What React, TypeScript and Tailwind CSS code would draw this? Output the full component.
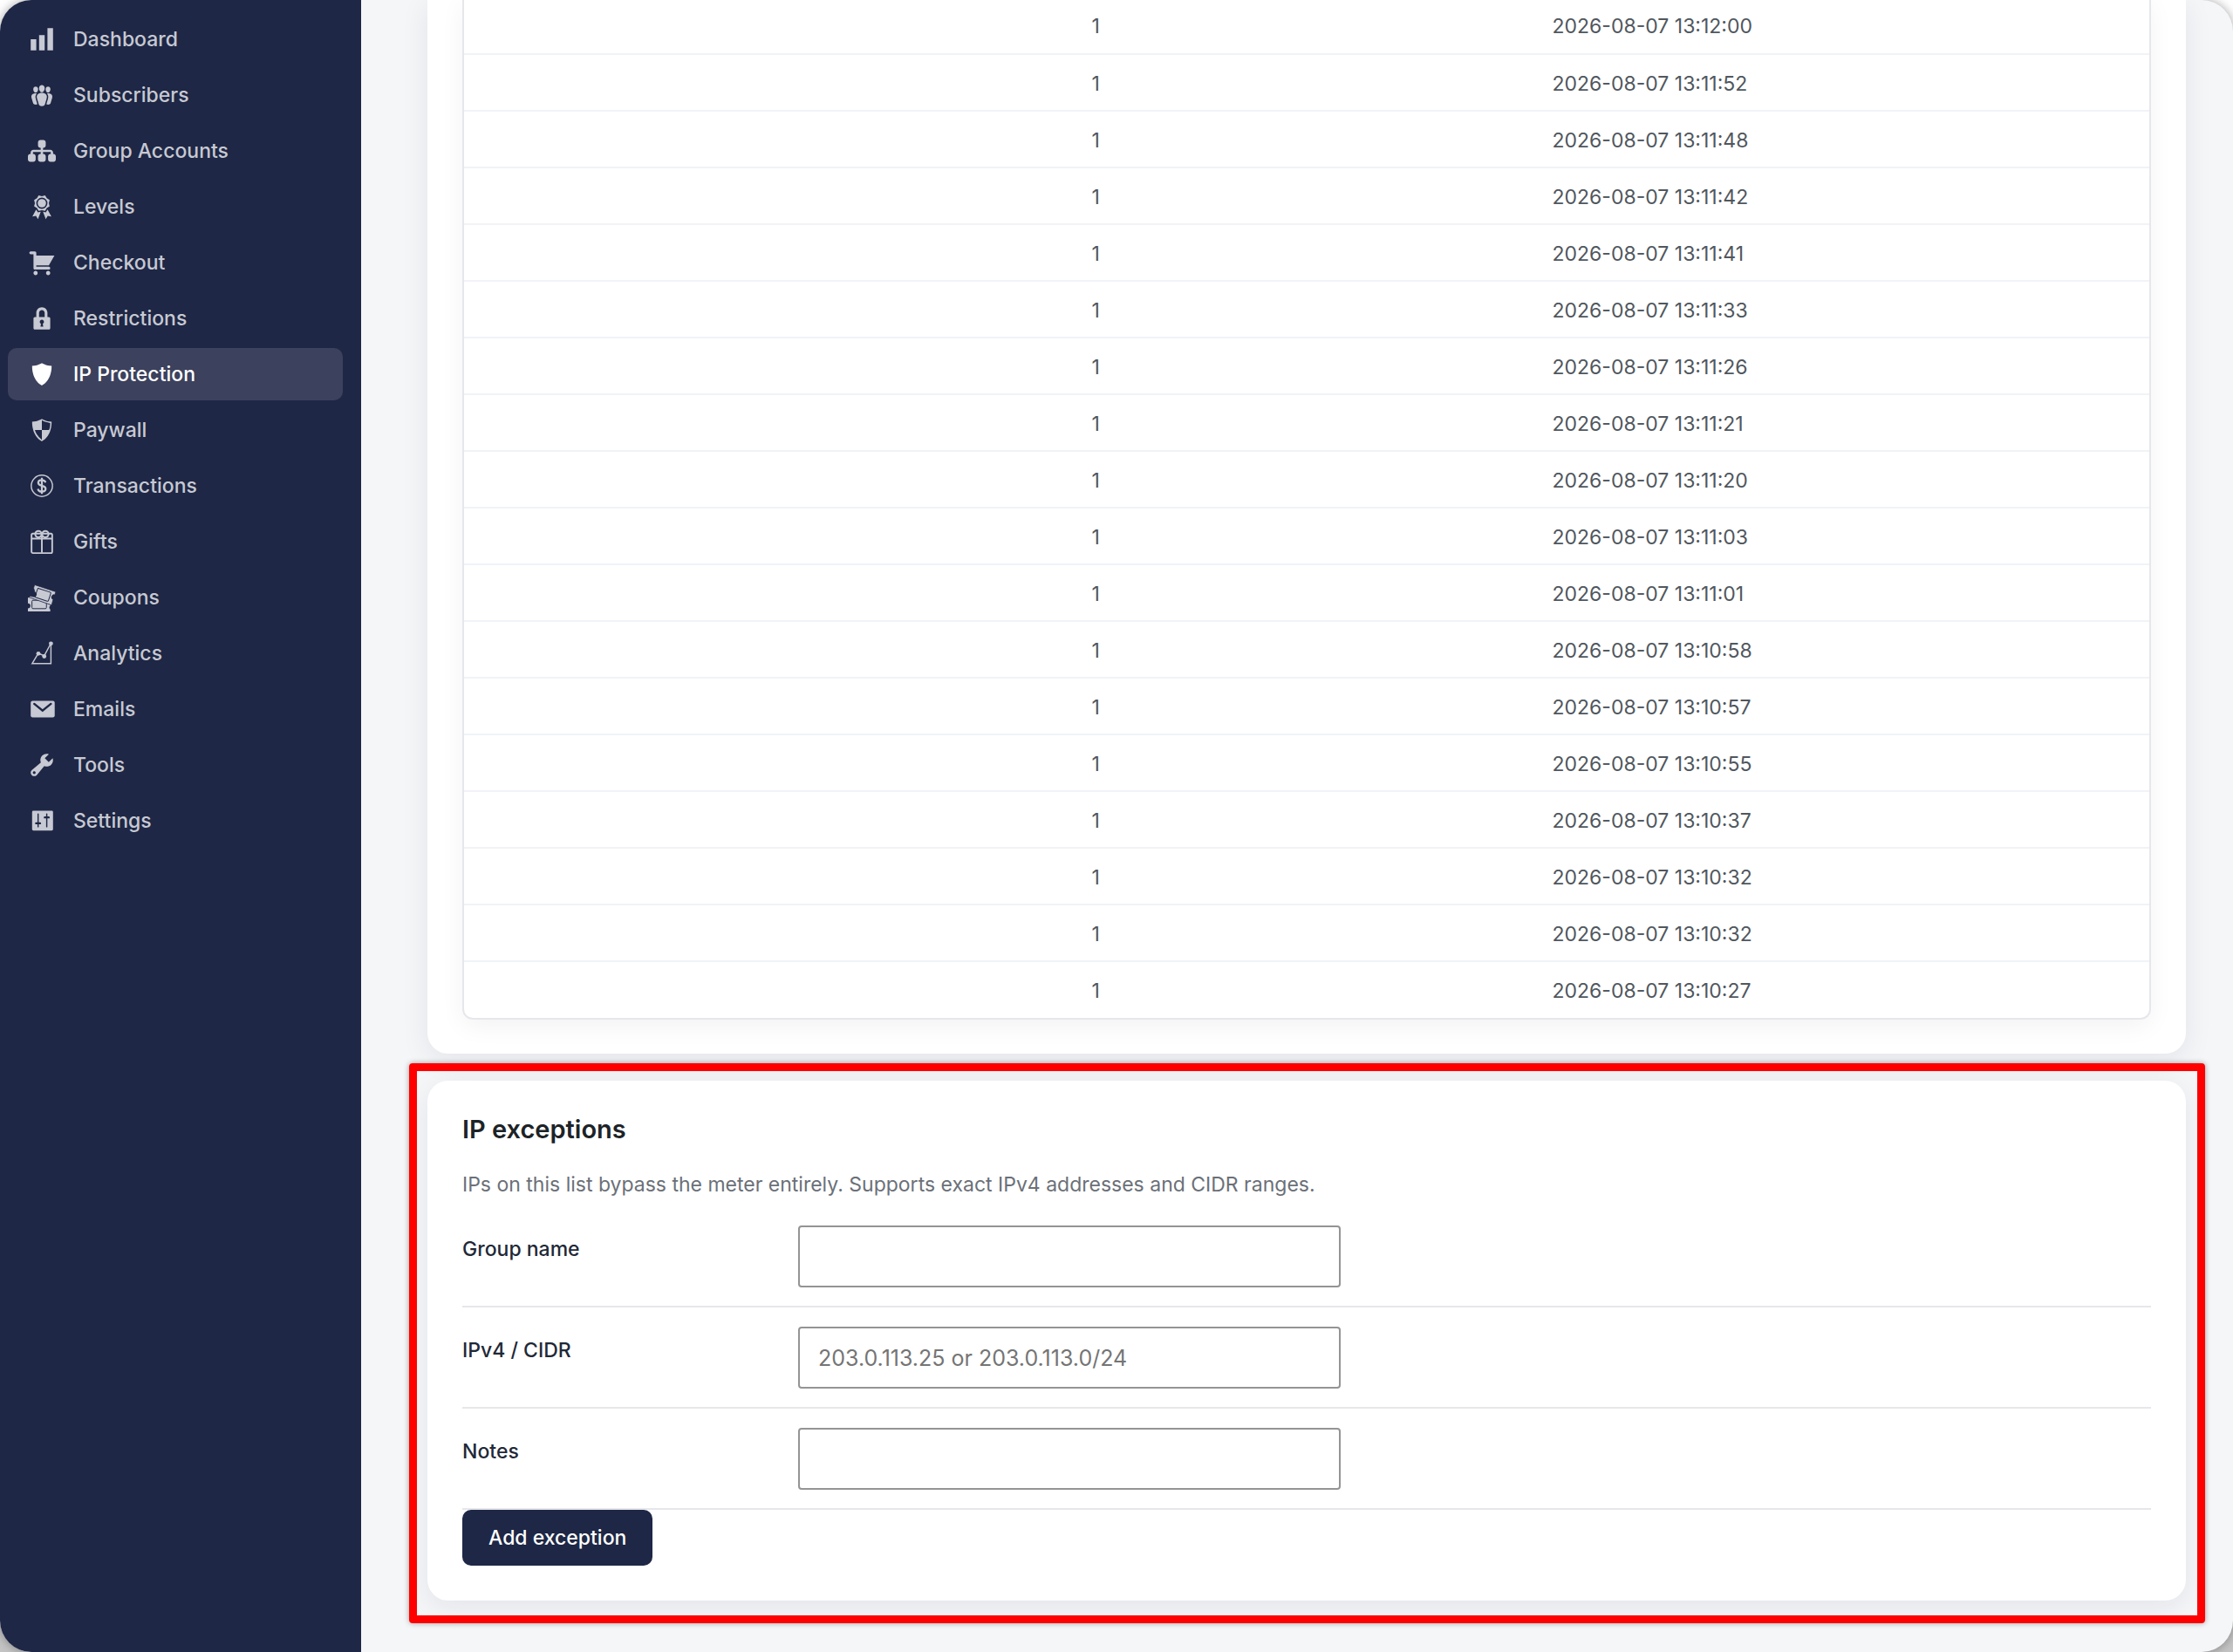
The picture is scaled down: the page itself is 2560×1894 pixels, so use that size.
import type { ReactNode } from 'react';
import { FaSitemap } from 'react-icons/fa6';

type NavItem = {
  label: string;
  icon: ReactNode;
  active?: boolean;
};

const Glyph = ({ children }: { children: ReactNode }) => (
  <svg viewBox="0 0 20 20" className="size-8 shrink-0 overflow-visible" fill="currentColor" fillRule="evenodd" aria-hidden="true">
    {children}
  </svg>
);

const navItems: NavItem[] = [
  {
    label: 'Dashboard',
    icon: <Glyph><path d="M18 18V2h-4v16h4zm-6 0V7H8v11h4zm-6 0v-8H2v8h4z" /></Glyph>
  },
  {
    label: 'Subscribers',
    icon: (
      <Glyph>
        <path d="M8.03 4.46c-.29 1.28.55 3.46 1.97 3.46 1.41 0 2.25-2.18 1.96-3.46-.22-.98-1.08-1.63-1.96-1.63-.89 0-1.74.65-1.97 1.63zm-4.13.9c-.25 1.08.47 2.93 1.67 2.93s1.92-1.85 1.67-2.93c-.19-.83-.92-1.39-1.67-1.39s-1.48.56-1.67 1.39zm8.86 0c-.25 1.08.47 2.93 1.66 2.93 1.2 0 1.92-1.85 1.67-2.93-.19-.83-.92-1.39-1.67-1.39-.74 0-1.47.56-1.66 1.39zm-.59 11.43l1.25-4.3C14.2 10 12.71 8.47 10 8.47c-2.72 0-4.21 1.53-3.44 4.02l1.26 4.3C8.05 17.51 9 18 10 18c.98 0 1.94-.49 2.17-1.21zm-6.1-7.63c-.49.67-.96 1.83-.42 3.59l1.12 3.79c-.34.2-.77.31-1.2.31-.85 0-1.65-.41-1.85-1.03l-1.07-3.65c-.65-2.11.61-3.4 2.92-3.4.27 0 .54.02.79.06-.1.1-.2.22-.29.33zm8.35-.39c2.31 0 3.58 1.29 2.92 3.4l-1.07 3.65c-.2.62-1 1.03-1.85 1.03-.43 0-.86-.11-1.2-.31l1.11-3.77c.55-1.78.08-2.94-.42-3.61-.08-.11-.18-.23-.28-.33.25-.04.51-.06.79-.06z" />
      </Glyph>
    )
  },
  { label: 'Group Accounts', icon: <FaSitemap className="size-8 shrink-0" aria-hidden="true" /> },
  {
    label: 'Levels',
    icon: (
      <Glyph>
        <path d="M4.46 5.16L5 7.46l-.54 2.29 2.01 1.24L7.7 13l2.3-.54 2.3.54 1.23-2.01 2.01-1.24L15 7.46l.54-2.3-2-1.24-1.24-2.01-2.3.55-2.29-.54-1.25 2zM10 11.5a4 4 0 1 1 0-8 4 4 0 0 1 0 8z" />
        <circle cx="10" cy="7.5" r="3" />
        <path d="M5.9 12.1L3.2 17.1l2.6-.5L7.2 18.9l2-5.3-2 .5zM14.1 12.1l2.7 5-2.6-.5-1.4 2.3-2-5.3 2 .5z" />
      </Glyph>
    )
  },
  {
    label: 'Checkout',
    icon: (
      <Glyph>
        <path d="M6 13h9c.55 0 1 .45 1 1s-.45 1-1 1H5c-.55 0-1-.45-1-1V4H2c-.55 0-1-.45-1-1s.45-1 1-1h3c.55 0 1 .45 1 1v2h13l-4 7H6v1zm-.5 3c.83 0 1.5.67 1.5 1.5S6.33 19 5.5 19 4 18.33 4 17.5 4.67 16 5.5 16zm9 0c.83 0 1.5.67 1.5 1.5s-.67 1.5-1.5 1.5-1.5-.67-1.5-1.5.67-1.5 1.5-1.5z" />
      </Glyph>
    )
  },
  {
    label: 'Restrictions',
    icon: (
      <Glyph>
        <path d="M14 9h1c.55 0 1 .45 1 1v7c0 .55-.45 1-1 1H5c-.55 0-1-.45-1-1v-7c0-.55.45-1 1-1h1V6c0-2.21 1.79-4 4-4s4 1.79 4 4v3zm-2 0V6c0-1.1-.9-2-2-2s-2 .9-2 2v3h4zm-1 7l-.36-2.15c.51-.24.86-.75.86-1.35 0-.83-.67-1.5-1.5-1.5s-1.5.67-1.5 1.5c0 .6.35 1.11.86 1.35L9 16h2z" />
      </Glyph>
    )
  },
  {
    label: 'IP Protection',
    active: true,
    icon: <Glyph><path d="M10 2s3 2 7 2c0 11-7 14-7 14S3 15 3 4c4 0 7-2 7-2z" /></Glyph>
  },
  {
    label: 'Paywall',
    icon: (
      <Glyph>
        <path d="M10 2s3 2 7 2c0 11-7 14-7 14S3 15 3 4c4 0 7-2 7-2zm0 8h5s1-1 1-5c0 0-5-1-6-2v7H5c1 4 5 7 5 7v-7z" />
      </Glyph>
    )
  },
  {
    label: 'Transactions',
    icon: (
      <Glyph>
        <g fill="none" stroke="currentColor">
          <circle cx="10" cy="10" r="7.6" strokeWidth="0.9" />
          <path d="M12.6 7.6C12.3 6.4 11.300 5.800 10 5.800c-1.500 0-2.600.8-2.600 2 0 2.900 5.300 1.400 5.300 4.300 0 1.300-1.200 2.100-2.700 2.100-1.500 0-2.600-.7-2.800-2M10 4.200v11.600" strokeWidth="1.400" />
        </g>
      </Glyph>
    )
  },
  {
    label: 'Gifts',
    icon: (
      <Glyph>
        <g fill="none" stroke="currentColor" strokeWidth="1.2">
          <rect x="2.6" y="4.2" width="14.8" height="14" rx="1" />
          <path d="M2.6 7.800h14.800M10 4v14" />
          <circle cx="7.500" cy="4.600" r="2.300" />
          <circle cx="12.500" cy="4.600" r="2.300" />
        </g>
      </Glyph>
    )
  },
  {
    label: 'Coupons',
    icon: (
      <Glyph>
        <path d="M0 10.200l3-.4 13 5.200v1a1.500 1.500 0 0 0 0 2.500V20H0v-2.200a1.700 1.700 0 0 0 0-3.600z" />
        <rect x="2.900" y="12" width="10.400" height="6" rx="0.800" fill="none" stroke="#1e2745" strokeWidth="0.600" />
        <path
          d="M4.800.9L20 5.900l-.7 2.200a1.700 1.700 0 0 0-1.200 3.300l-1.100 4.100L.900 9.900l.5-.9 2.300.4a1.700 1.700 0 0 0 1.300-3.200L4.100 3.200z"
          stroke="#1e2745"
          strokeWidth="0.500"
        />
        <rect x="5.800" y="4.700" width="10" height="6.800" rx="0.800" transform="rotate(18 10.800 8.100)" fill="none" stroke="#1e2745" strokeWidth="0.600" />
      </Glyph>
    )
  },
  {
    label: 'Analytics',
    icon: (
      <Glyph>
        <path d="M3 17.400L7.500 10l4.200 1.800 4.800-9v14.600z" fill="none" stroke="currentColor" strokeWidth="0.900" />
        <circle cx="7.500" cy="10.200" r="1.500" />
        <circle cx="11.700" cy="12.200" r="1.500" />
        <circle cx="16.500" cy="3" r="1.500" />
      </Glyph>
    )
  },
  {
    label: 'Emails',
    icon: (
      <Glyph>
        <rect x="2" y="4" width="17.200" height="12" rx="1.400" />
        <path d="M4.500 6.200l6 4.900 6-4.900" fill="none" stroke="#1e2745" strokeWidth="1.500" strokeLinecap="round" />
      </Glyph>
    )
  },
  {
    label: 'Tools',
    icon: (
      <Glyph>
        <path d="M16.680 9.770c-1.340 1.340-3.300 1.670-4.950.99l-5.410 6.520c-.99.99-2.590.99-3.580 0s-.99-2.590 0-3.570l6.520-5.420c-.68-1.650-.35-3.610.99-4.950 1.280-1.280 3.120-1.620 4.720-1.060l-2.890 2.890 2.820 2.820 2.860-2.870c.53 1.580.18 3.390-1.080 4.650zM3.810 16.210c.4.39 1.040.39 1.430 0 .4-.4.400-1.040 0-1.430-.39-.4-1.030-.4-1.430 0-.39.39-.39 1.030 0 1.430z" />
      </Glyph>
    )
  },
  {
    label: 'Settings',
    icon: (
      <Glyph>
        <rect x="3" y="2.800" width="15" height="14.200" rx="0.900" />
        <g fill="none" stroke="#1e2745" strokeLinecap="round">
          <path d="M7.300 5.200v9.100M13.500 5.200v9.100" strokeWidth="0.900" />
          <path d="M5.900 11.800h2.800M12.100 7.600h2.800" strokeWidth="1.500" />
        </g>
      </Glyph>
    )
  }
];

const hits = [
  '2026-08-07 13:12:00',
  '2026-08-07 13:11:52',
  '2026-08-07 13:11:48',
  '2026-08-07 13:11:42',
  '2026-08-07 13:11:41',
  '2026-08-07 13:11:33',
  '2026-08-07 13:11:26',
  '2026-08-07 13:11:21',
  '2026-08-07 13:11:20',
  '2026-08-07 13:11:03',
  '2026-08-07 13:11:01',
  '2026-08-07 13:10:58',
  '2026-08-07 13:10:57',
  '2026-08-07 13:10:55',
  '2026-08-07 13:10:37',
  '2026-08-07 13:10:32',
  '2026-08-07 13:10:32',
  '2026-08-07 13:10:27'
];

const fields = [
  { id: 'group-name', label: 'Group name', placeholder: '' },
  { id: 'cidr', label: 'IPv4 / CIDR', placeholder: '203.0.113.25 or 203.0.113.0/24' },
  { id: 'notes', label: 'Notes', placeholder: '' }
];

export default function App() {
  return (
    <div className="h-screen bg-linear-to-b from-white to-[#c4c4c4] font-[Inter,sans-serif]">
      <div className="flex h-full overflow-hidden rounded-[36px] bg-[#f5f6f8] shadow-[0_0_12px_rgba(0,0,0,0.35)]">
        <Sidebar />
        <main className="flex min-w-0 flex-1 flex-col justify-end gap-[31px] pr-[54px] pb-[59px] pl-[76px]">
          <HitLog />
          <ExceptionsCard />
        </main>
      </div>
    </div>
  );
}

function Sidebar() {
  return (
    <nav className="flex w-[414px] shrink-0 flex-col gap-1 bg-[#1e2745] pt-[15px] pr-[21px] pl-[9px]">
      {navItems.map((item) => (
        <a
          key={item.label}
          href="#"
          className={`flex h-[60px] items-center gap-5 rounded-[10px] pl-[23px] text-[23px] font-medium ${
            item.active ? 'bg-[#3c415d] text-white' : 'text-[#c7c9d3]'
          }`}
        >
          {item.icon}
          {item.label}
        </a>
      ))}
    </nav>
  );
}

function HitLog() {
  return (
    <section className="rounded-b-3xl bg-white px-10 pb-[39px] shadow-[0_8px_32px_rgba(20,25,50,0.08)]">
      <div className="overflow-hidden rounded-b-xl border-2 border-t-0 border-[#e6e7eb] shadow-[0_8px_28px_rgba(0,0,0,0.05)]">
        <table className="w-full table-fixed text-left text-[23px] leading-6 text-[#50575e]">
          <colgroup>
            <col className="w-[36%]" />
            <col className="w-[528px]" />
            <col />
          </colgroup>
          <tbody>
            {hits.map((time, i) => (
              <tr key={i} className="h-[65px] border-b-2 border-[#f0f3f7] last:border-b-0">
                <td className="px-6 pt-0.5" />
                <td className="px-6 pt-0.5">1</td>
                <td className="px-6 pt-0.5">{time}</td>
              </tr>
            ))}
          </tbody>
        </table>
      </div>
    </section>
  );
}

function ExceptionsCard() {
  return (
    <section className="relative rounded-3xl bg-white p-10 shadow-[0_8px_32px_rgba(20,25,50,0.08)]">
      <h2 className="text-[29px] leading-8 font-semibold text-[#1d2327]">IP exceptions</h2>
      <p className="mt-[31px] text-[23px] leading-8 text-[#6b7078]">
        IPs on this list bypass the meter entirely. Supports exact IPv4 addresses and CIDR ranges.
      </p>
      <form className="mt-[9px]">
        {fields.map((field) => (
          <div key={field.id} className="flex items-start border-b-2 border-[#e6e7eb] pt-[22px] pb-[21px]">
            <label htmlFor={field.id} className="w-[385px] shrink-0 pt-[11px] text-[23px] leading-8 font-medium text-[#1f2937]">
              {field.label}
            </label>
            <input
              id={field.id}
              type="text"
              placeholder={field.placeholder}
              className="h-[71px] w-[622px] rounded border-2 border-[#949494] bg-white px-[21px] text-[25px] text-[#2c3338] placeholder:text-[#757575]"
            />
          </div>
        ))}
        <button type="button" className="block h-16 rounded-[10px] bg-[#1e2745] px-[30px] text-[23px] font-medium text-white">
          Add exception
        </button>
      </form>
      <div className="pointer-events-none absolute -top-5 -right-[22px] -bottom-[26px] -left-[21px] rounded-sm border-[9px] border-[#ff0000] shadow-[0_0_6px_rgba(0,0,0,0.35)]" />
    </section>
  );
}
